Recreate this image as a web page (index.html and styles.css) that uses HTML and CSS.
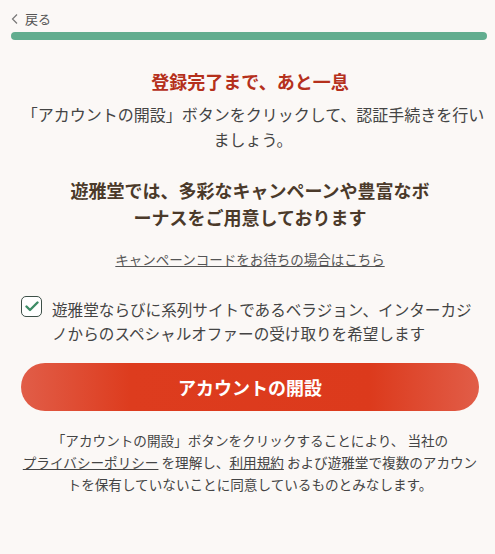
FILE: index.html
```html
<html>
<head>
<title>登録完了まで、あと一息</title>
<link rel="stylesheet" href="styles.css">
</head>
<body>

<div class="topbar">
  <a class="back" href="#">
    <svg class="chev" width="8" height="12" viewBox="0 0 8 12"><polyline points="6,1.5 1.5,6 6,10.5" fill="none" stroke="#777" stroke-width="1.2"/></svg>
    <span>戻る</span>
  </a>
</div>
<div class="progress"></div>

<div class="page">
  <h1 class="title">登録完了まで、あと一息</h1>
  <p class="lead">「アカウントの開設」ボタンをクリックして、認証手続きを行いましょう。</p>

  <h2 class="promo">遊雅堂では、多彩なキャンペーンや豊富なボーナスをご用意しております</h2>

  <p class="code-link"><a href="#">キャンペーンコードをお待ちの場合はこちら</a></p>

  <label class="optin">
    <span class="box">
      <svg width="14" height="11" viewBox="0 0 14 11"><polyline points="1.5,5.5 5,9 12.5,1.5" fill="none" stroke="#3d8c66" stroke-width="2.4" stroke-linecap="round" stroke-linejoin="round"/></svg>
    </span>
    <span class="optin-text">遊雅堂ならびに系列サイトであるベラジョン、インターカジノからのスペシャルオファーの受け取りを希望します</span>
  </label>

  <button class="open-btn" type="button">アカウントの開設</button>

  <p class="terms">「アカウントの開設」ボタンをクリックすることにより、 当社の <a href="#">プライバシーポリシー</a> を理解し、<a href="#">利用規約</a> および遊雅堂で複数のアカウントを保有していないことに同意しているものとみなします。</p>
</div>

</body>
</html>
```

FILE: styles.css
```css
body {
  margin: 0;
  background-color: #fbf8f6;
  font-family: "Noto Sans CJK JP", "Noto Sans", sans-serif;
  color: #444;
}
.topbar {
  padding: 9px 0 0 11px;
  height: 21px;
}
.back {
  display: flex;
  align-items: center;
  gap: 6px;
  color: #555;
  text-decoration: none;
  font-size: 13px;
  line-height: 20px;
}
.progress {
  margin: 2px 8px 0 11px;
  height: 8px;
  border-radius: 4px;
  background-color: #62ad8f;
}
.page {
  padding: 0 16px 0 21px;
  text-align: center;
}
.title {
  margin: 28px 0 0 0;
  font-size: 18px;
  line-height: 26px;
  font-weight: bold;
  color: #b5301c;
}
.lead {
  margin: 8px -10px 0 -4px;
  font-size: 16px;
  line-height: 25px;
  color: #444;
}
.promo {
  max-width: 372px;
  margin: 25px auto 0 auto;
  font-size: 18px;
  line-height: 27px;
  font-weight: bold;
  color: #4b3a2a;
}
.code-link {
  margin: 18px 0 0 0;
  font-size: 13.5px;
  line-height: 20px;
}
.code-link a {
  color: #555;
}
.optin {
  display: flex;
  gap: 10px;
  margin-top: 28px;
  text-align: left;
}
.box {
  flex: none;
  width: 19px;
  height: 19px;
  margin-top: -1px;
  border: 1.5px solid #3e5048;
  border-radius: 5px;
  background-color: #fff;
  display: flex;
  align-items: center;
  justify-content: center;
}
.optin-text {
  font-size: 15.6px;
  line-height: 24px;
  color: #444;
}
.open-btn {
  display: block;
  width: 100%;
  height: 48px;
  margin-top: 18px;
  border: 0;
  border-radius: 24px;
  background: linear-gradient(90deg, #e15d48 0%, #dd3c1e 24%, #dc3a1c 76%, #e15d48 100%);
  color: #fff;
  font-family: "Noto Sans CJK JP", "Noto Sans", sans-serif;
  font-size: 18px;
  font-weight: bold;
}
.terms {
  margin: 18px -2px 0 -2px;
  font-size: 13.6px;
  line-height: 22px;
  color: #444;
}
.terms a {
  white-space: nowrap;
  color: #444;
}
```
